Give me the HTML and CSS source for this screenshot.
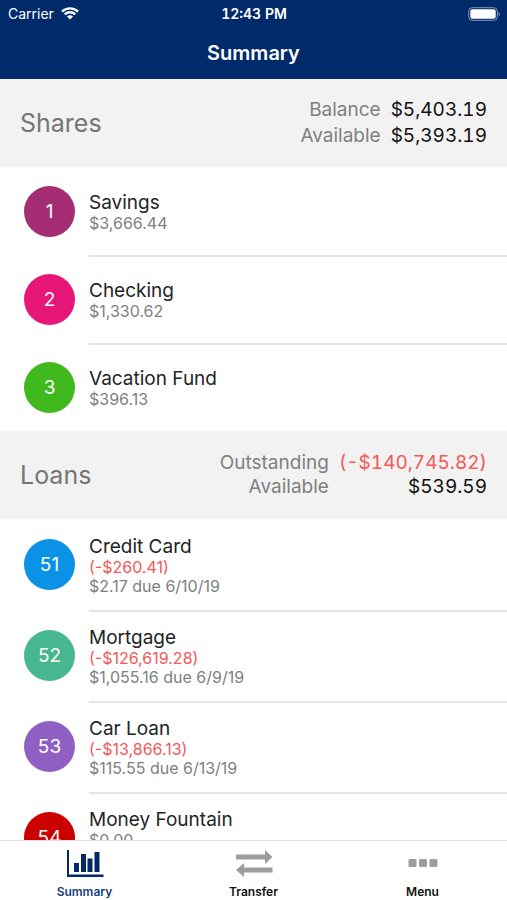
FILE: index.html
```html
<!DOCTYPE html>
<html lang="en">
<head>
<meta charset="utf-8">
<meta name="viewport" content="width=device-width, initial-scale=1">
<title>Summary</title>
<link rel="stylesheet" href="styles.css">
</head>
<body>
<header class="top">
  <div class="status">
    <div class="carrier">Carrier
      <svg class="wifi" viewBox="0 0 18 13" aria-hidden="true"><path d="M1 4.6a11.4 11.4 0 0 1 16 0M3.8 7.4a7.4 7.4 0 0 1 10.4 0" fill="none" stroke="#fff" stroke-width="2.3"/><path d="M9 12.6 5.9 9.5a4.4 4.4 0 0 1 6.2 0z" fill="#fff"/></svg>
    </div>
    <div class="time">12:43 PM</div>
    <svg class="battery" viewBox="0 0 32 14" aria-hidden="true"><rect x=".7" y=".7" width="28.6" height="12.6" rx="3.5" fill="none" stroke="#8796b8" stroke-width="1"/><rect x="2.3" y="2.3" width="25.4" height="9.4" rx="2" fill="#fff"/><path d="M30.5 5v4q1.3-.6 1.3-2t-1.3-2z" fill="#8796b8"/></svg>
  </div>
  <h1 class="title">Summary</h1>
</header>
<main class="accounts">
  <section>
    <div class="group">
      <h2 class="group-name">Shares</h2>
      <dl class="totals totals-loose">
        <dt>Balance</dt><dd>$5,403.19</dd>
        <dt>Available</dt><dd>$5,393.19</dd>
      </dl>
    </div>
    <ul class="list">
      <li class="row share"><span class="badge plum">1</span><div class="info"><h3>Savings</h3><p>$3,666.44</p></div></li>
      <li class="row share"><span class="badge pink">2</span><div class="info"><h3>Checking</h3><p>$1,330.62</p></div></li>
      <li class="row share"><span class="badge green">3</span><div class="info"><h3>Vacation Fund</h3><p>$396.13</p></div></li>
    </ul>
  </section>
  <section>
    <div class="group">
      <h2 class="group-name">Loans</h2>
      <dl class="totals">
        <dt>Outstanding</dt><dd class="owed">(-$140,745.82)</dd>
        <dt>Available</dt><dd>$539.59</dd>
      </dl>
    </div>
    <ul class="list">
      <li class="row loan"><span class="badge blue">51</span><div class="info"><h3>Credit Card</h3><p class="owed">(-$260.41)</p><p>$2.17 due 6/10/19</p></div></li>
      <li class="row loan"><span class="badge teal">52</span><div class="info"><h3>Mortgage</h3><p class="owed">(-$126,619.28)</p><p>$1,055.16 due 6/9/19</p></div></li>
      <li class="row loan"><span class="badge violet">53</span><div class="info"><h3>Car Loan</h3><p class="owed">(-$13,866.13)</p><p>$115.55 due 6/13/19</p></div></li>
      <li class="row loan last"><span class="badge red">54</span><div class="info"><h3>Money Fountain</h3><p>$0.00</p></div></li>
    </ul>
  </section>
</main>
<nav class="tabs">
  <a class="tab active" href="#summary" aria-current="page">
    <svg viewBox="0 0 38 28" aria-hidden="true"><path d="M1 0h2v24.500h34.500v2.500H1zM8 13h5v9H8zM15 4h5v18h-5zM21.500 8.500h5V22h-5zM28.500 2h5v20h-5z" fill="#002a69"/></svg>
    Summary
  </a>
  <a class="tab" href="#transfer">
    <svg viewBox="0 0 38 28" aria-hidden="true"><path d="M1 4.500h29V0l7.500 7-7.500 7V9.500H1zM37.500 17.500H9V13L1 20l8 7v-4.500h28.500z" fill="#9d9d9d"/></svg>
    Transfer
  </a>
  <a class="tab" href="#menu">
    <svg viewBox="0 0 38 28" aria-hidden="true"><g fill="#9d9d9d"><rect x="4.500" y="9" width="8" height="8" rx="1.500"/><rect x="15" y="9" width="8" height="8" rx="1.500"/><rect x="25.500" y="9" width="8" height="8" rx="1.500"/></g></svg>
    Menu
  </a>
</nav>
</body>
</html>
```
FILE: styles.css
```css
* { box-sizing: border-box; margin: 0; padding: 0; }

body {
  display: flex;
  flex-direction: column;
  height: 100vh;
  background: #fff;
  color: #242424;
  font-family: Inter, Roboto, "Liberation Sans", sans-serif;
}

.top {
  flex: none;
  padding-bottom: 12px;
  background: #002a69;
  color: #fff;
}

.status {
  display: grid;
  grid-template-columns: 1fr auto 1fr;
  align-items: center;
  height: 27px;
  padding: 0 7px 0 8px;
  font-size: 14px;
}

.carrier { display: flex; align-items: center; gap: 7px; }
.wifi { width: 18px; height: 13px; }
.time { font-weight: 600; font-variant-numeric: tabular-nums; }
.battery { width: 32px; height: 14px; justify-self: end; }

.title {
  font-size: 20px;
  font-weight: 600;
  line-height: 24px;
  padding: 14px 0 2px;
  text-align: center;
}

.accounts { flex: 1; min-height: 0; overflow: hidden; }

.group {
  display: flex;
  align-items: center;
  justify-content: space-between;
  height: 88px;
  padding: 0 20px;
  background: #f2f2f2;
}

.group-name { color: #757575; font-size: 25px; font-weight: 400; }

.totals {
  display: grid;
  grid-template-columns: auto auto;
  column-gap: 10px;
  font-size: 19px;
  line-height: 24px;
  text-align: right;
}
.totals-loose { line-height: 26px; }
.totals dt { color: #808080; }
.totals dd { color: #111; font-variant-numeric: tabular-nums; }

.list { list-style: none; }

.row { display: flex; gap: 14px; padding-left: 24px; }
.share { height: 88px; }
.loan { height: 91px; }

.badge {
  flex: none;
  align-self: center;
  width: 51px;
  height: 51px;
  border-radius: 50%;
  color: #fff;
  font-size: 19px;
  line-height: 51px;
  text-align: center;
}
.plum { background: #a42d74; }
.pink { background: #e71779; }
.green { background: #40b91e; }
.blue { background: #0992e6; }
.teal { background: #46b78e; }
.violet { background: #905fc3; }
.red { background: #cd0000; }

.info {
  flex: 1;
  display: flex;
  flex-direction: column;
  justify-content: center;
  border-top: 2px solid #e6e6e6;
}
.row:first-child .info { border-top-color: transparent; }
.last .info { justify-content: flex-start; padding-top: 14px; }

.info h3 { font-size: 19px; font-weight: 400; line-height: 23px; }
.info p { color: #808080; font-size: 16px; line-height: 19px; }

.info .owed, .totals .owed { color: #f65757; }

.tabs {
  flex: none;
  display: flex;
  height: 60px;
  border-top: 1px solid #dedede;
  background: #fff;
}

.tab {
  flex: 1;
  display: flex;
  flex-direction: column;
  align-items: center;
  gap: 6px;
  padding-top: 9px;
  color: #111;
  font-size: 12px;
  font-weight: 600;
  line-height: 16px;
  text-decoration: none;
}
.tab svg { width: 38px; height: 28px; }
.active { color: #14407f; }
```
